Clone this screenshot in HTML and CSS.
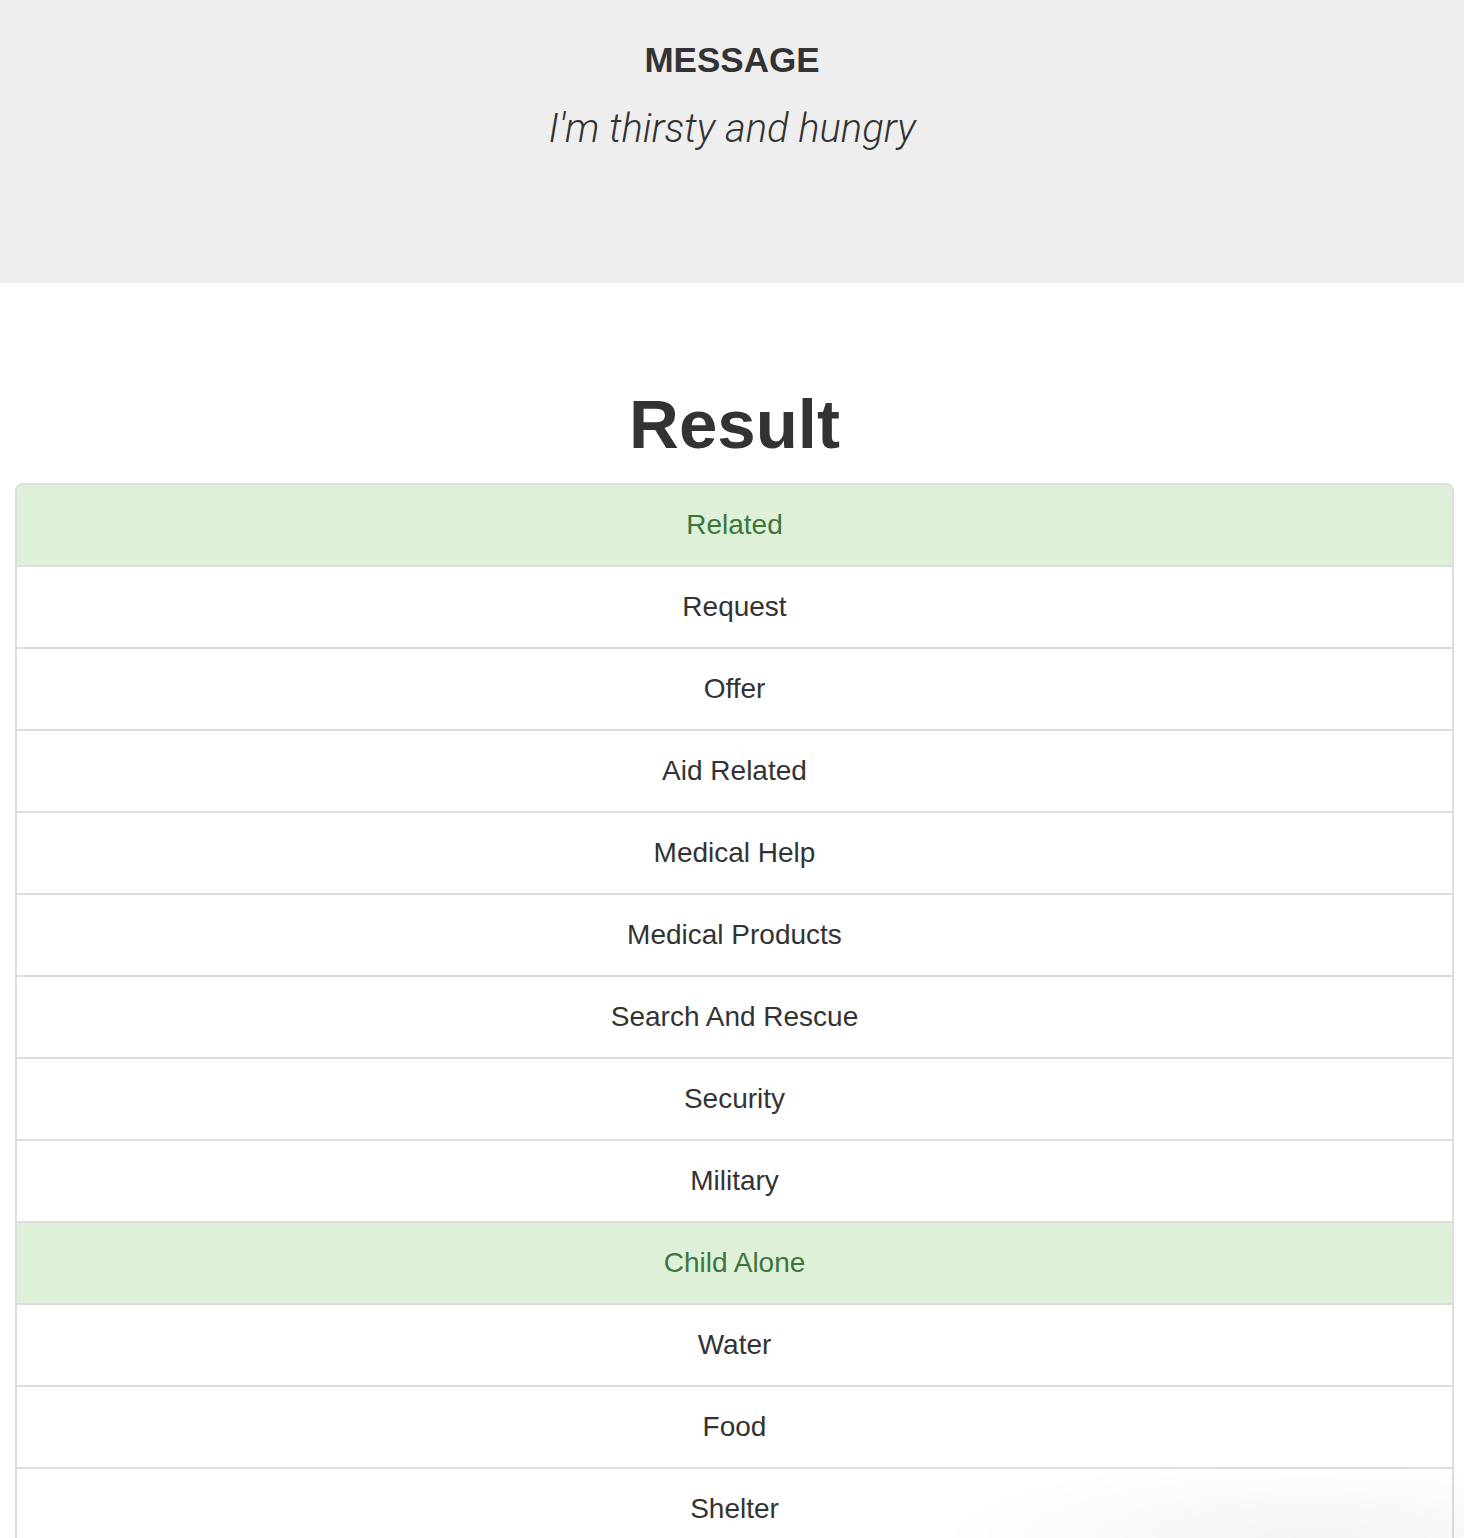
FILE: index.html
```html
<!DOCTYPE html>
<html lang="en">
<head>
<meta charset="utf-8">
<title>Result</title>
<link rel="stylesheet" href="styles.css">
</head>
<body>
<div class="jumbotron">
  <h4 class="msg-label">MESSAGE</h4>
  <p class="msg-text">I'm thirsty and hungry</p>
</div>
<div class="content">
  <h1 class="result-title">Result</h1>
  <ul class="list-group">
    <li class="item item-success">Related</li>
    <li class="item">Request</li>
    <li class="item">Offer</li>
    <li class="item">Aid Related</li>
    <li class="item">Medical Help</li>
    <li class="item">Medical Products</li>
    <li class="item">Search And Rescue</li>
    <li class="item">Security</li>
    <li class="item">Military</li>
    <li class="item item-success">Child Alone</li>
    <li class="item">Water</li>
    <li class="item">Food</li>
    <li class="item">Shelter</li>
  </ul>
</div>
<div class="corner-fade"></div>
</body>
</html>
```
FILE: styles.css
```css
html, body {
  margin: 0;
  padding: 0;
  background: #fff;
}
body {
  font-family: "Liberation Sans", Arial, sans-serif;
  color: #333;
  overflow: hidden;
  height: 1538px;
}
.jumbotron {
  background: #eee;
  height: 283px;
  box-sizing: border-box;
  padding-top: 40px;
  text-align: center;
}
.msg-label {
  margin: 0;
  font-size: 35px;
  line-height: 40px;
  font-weight: 700;
}
.msg-text {
  margin: 26px 0 0;
  font-family: Roboto, "Liberation Sans", sans-serif;
  font-style: italic;
  font-weight: 300;
  font-size: 40px;
  line-height: 46px;
}
.content {
  padding: 102px 10px 0 15px;
}
.result-title {
  margin: 0 0 18px;
  text-align: center;
  font-size: 69px;
  line-height: 80px;
  font-weight: 700;
}
.list-group {
  list-style: none;
  margin: 0;
  padding: 0;
}
.item {
  border: 2px solid #ddd;
  margin-bottom: -2px;
  padding: 20px 30px;
  font-size: 28px;
  line-height: 40px;
  text-align: center;
  background: #fff;
}
.item:first-child {
  border-top-left-radius: 8px;
  border-top-right-radius: 8px;
}
.item-success {
  background: #dff0d8;
  color: #3c763d;
}
.corner-fade {
  position: fixed;
  right: 0;
  bottom: 0;
  width: 620px;
  height: 80px;
  pointer-events: none;
  background: radial-gradient(ellipse 60% 100% at 75% 100%, rgba(0,0,0,0.045), rgba(0,0,0,0) 100%);
}
```
